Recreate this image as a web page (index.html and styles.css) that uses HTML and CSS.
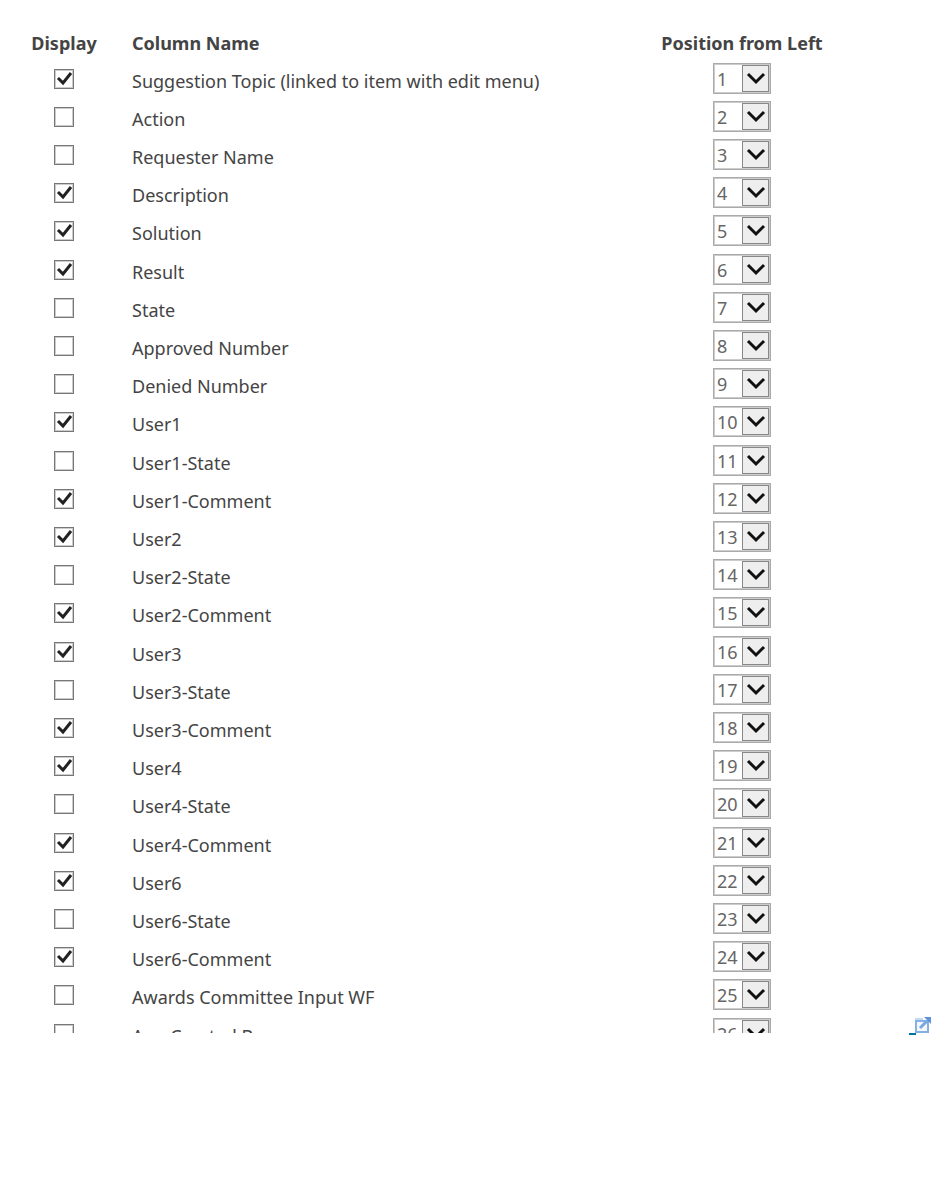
FILE: index.html
```html
<!DOCTYPE html>
<html lang="en">
<head>
<meta charset="utf-8">
<title>Edit View Columns</title>
<link rel="stylesheet" href="styles.css">
</head>
<body>
<main class="view">
<div class="list">
<table class="columns">
<thead>
<tr><th class="display">Display</th><th class="name">Column Name</th><th class="position">Position from Left</th></tr>
</thead>
<tbody>
<tr><td class="display"><input type="checkbox" id="c1" checked></td><td class="name"><label for="c1">Suggestion Topic (linked to item with edit menu)</label></td><td class="position"><select aria-label="Position of Suggestion Topic"><option>1</option></select></td></tr>
<tr><td class="display"><input type="checkbox" id="c2"></td><td class="name"><label for="c2">Action</label></td><td class="position"><select aria-label="Position of Action"><option>2</option></select></td></tr>
<tr><td class="display"><input type="checkbox" id="c3"></td><td class="name"><label for="c3">Requester Name</label></td><td class="position"><select aria-label="Position of Requester Name"><option>3</option></select></td></tr>
<tr><td class="display"><input type="checkbox" id="c4" checked></td><td class="name"><label for="c4">Description</label></td><td class="position"><select aria-label="Position of Description"><option>4</option></select></td></tr>
<tr><td class="display"><input type="checkbox" id="c5" checked></td><td class="name"><label for="c5">Solution</label></td><td class="position"><select aria-label="Position of Solution"><option>5</option></select></td></tr>
<tr><td class="display"><input type="checkbox" id="c6" checked></td><td class="name"><label for="c6">Result</label></td><td class="position"><select aria-label="Position of Result"><option>6</option></select></td></tr>
<tr><td class="display"><input type="checkbox" id="c7"></td><td class="name"><label for="c7">State</label></td><td class="position"><select aria-label="Position of State"><option>7</option></select></td></tr>
<tr><td class="display"><input type="checkbox" id="c8"></td><td class="name"><label for="c8">Approved Number</label></td><td class="position"><select aria-label="Position of Approved Number"><option>8</option></select></td></tr>
<tr><td class="display"><input type="checkbox" id="c9"></td><td class="name"><label for="c9">Denied Number</label></td><td class="position"><select aria-label="Position of Denied Number"><option>9</option></select></td></tr>
<tr><td class="display"><input type="checkbox" id="c10" checked></td><td class="name"><label for="c10">User1</label></td><td class="position"><select aria-label="Position of User1"><option>10</option></select></td></tr>
<tr><td class="display"><input type="checkbox" id="c11"></td><td class="name"><label for="c11">User1-State</label></td><td class="position"><select aria-label="Position of User1-State"><option>11</option></select></td></tr>
<tr><td class="display"><input type="checkbox" id="c12" checked></td><td class="name"><label for="c12">User1-Comment</label></td><td class="position"><select aria-label="Position of User1-Comment"><option>12</option></select></td></tr>
<tr><td class="display"><input type="checkbox" id="c13" checked></td><td class="name"><label for="c13">User2</label></td><td class="position"><select aria-label="Position of User2"><option>13</option></select></td></tr>
<tr><td class="display"><input type="checkbox" id="c14"></td><td class="name"><label for="c14">User2-State</label></td><td class="position"><select aria-label="Position of User2-State"><option>14</option></select></td></tr>
<tr><td class="display"><input type="checkbox" id="c15" checked></td><td class="name"><label for="c15">User2-Comment</label></td><td class="position"><select aria-label="Position of User2-Comment"><option>15</option></select></td></tr>
<tr><td class="display"><input type="checkbox" id="c16" checked></td><td class="name"><label for="c16">User3</label></td><td class="position"><select aria-label="Position of User3"><option>16</option></select></td></tr>
<tr><td class="display"><input type="checkbox" id="c17"></td><td class="name"><label for="c17">User3-State</label></td><td class="position"><select aria-label="Position of User3-State"><option>17</option></select></td></tr>
<tr><td class="display"><input type="checkbox" id="c18" checked></td><td class="name"><label for="c18">User3-Comment</label></td><td class="position"><select aria-label="Position of User3-Comment"><option>18</option></select></td></tr>
<tr><td class="display"><input type="checkbox" id="c19" checked></td><td class="name"><label for="c19">User4</label></td><td class="position"><select aria-label="Position of User4"><option>19</option></select></td></tr>
<tr><td class="display"><input type="checkbox" id="c20"></td><td class="name"><label for="c20">User4-State</label></td><td class="position"><select aria-label="Position of User4-State"><option>20</option></select></td></tr>
<tr><td class="display"><input type="checkbox" id="c21" checked></td><td class="name"><label for="c21">User4-Comment</label></td><td class="position"><select aria-label="Position of User4-Comment"><option>21</option></select></td></tr>
<tr><td class="display"><input type="checkbox" id="c22" checked></td><td class="name"><label for="c22">User6</label></td><td class="position"><select aria-label="Position of User6"><option>22</option></select></td></tr>
<tr><td class="display"><input type="checkbox" id="c23"></td><td class="name"><label for="c23">User6-State</label></td><td class="position"><select aria-label="Position of User6-State"><option>23</option></select></td></tr>
<tr><td class="display"><input type="checkbox" id="c24" checked></td><td class="name"><label for="c24">User6-Comment</label></td><td class="position"><select aria-label="Position of User6-Comment"><option>24</option></select></td></tr>
<tr><td class="display"><input type="checkbox" id="c25"></td><td class="name"><label for="c25">Awards Committee Input WF</label></td><td class="position"><select aria-label="Position of Awards Committee Input WF"><option>25</option></select></td></tr>
<tr><td class="display"><input type="checkbox" id="c26"></td><td class="name"><label for="c26">App Created By</label></td><td class="position"><select aria-label="Position of App Created By"><option>26</option></select></td></tr>
</tbody>
</table>
</div>
<a class="popout" href="#" aria-label="Open in new window"><svg width="22" height="18" viewBox="0 0 22 18" aria-hidden="true"><path d="M0 16h7v2H0z" fill="#0072a6"/><path d="M7 4h12v11H7z" fill="#f4f8fd" stroke="#84b0e6" stroke-width="2"/><path d="M6 1h8v2H6z" fill="#c3d9f5"/><path d="M11 11l7-7" stroke="#78a7e2" stroke-width="3"/><path d="M15 0h7v7l-2-2-3-3z" fill="#5c93da"/></svg></a>
</main>
</body>
</html>
```

FILE: styles.css
```css
* {
  box-sizing: border-box;
}

body {
  min-height: 100vh;
  margin: 0;
  background: #fff;
  color: #444;
  font-family: "Segoe UI", "Noto Sans", "Open Sans", sans-serif;
  font-size: 18px;
  line-height: 24px;
}

.view {
  display: flex;
  align-items: flex-end;
  padding: 28px 0 24px;
}

.list {
  flex: 1;
  max-height: 1005px;
  overflow: hidden;
}

.columns {
  width: 100%;
  border-collapse: collapse;
  table-layout: fixed;
}

th,
td {
  height: 38px;
  padding: 0;
  vertical-align: top;
}

th {
  height: 32px;
  padding-top: 3px;
}

tbody tr:nth-child(5n) td {
  height: 39px;
}

.display {
  width: 132px;
  padding-right: 4px;
  text-align: center;
}

.name {
  text-align: left;
}

td.name {
  padding-top: 9px;
}

.position {
  width: 334px;
  padding-right: 0;
  text-align: center;
}

input[type="checkbox"] {
  appearance: none;
  display: block;
  width: 20px;
  height: 20px;
  margin: 9px auto 0;
  border: 1px solid #777;
  outline: 1px solid #ccc;
  outline-offset: -2px;
  background: #fff;
}

input[type="checkbox"]:checked {
  background: url("data:image/svg+xml,%3Csvg xmlns='http://www.w3.org/2000/svg' viewBox='0 0 18 18'%3E%3Cpath d='M3 8l5 5 8-10' fill='none' stroke='%23222' stroke-width='3'/%3E%3C/svg%3E") center / 18px 18px no-repeat;
}

select {
  appearance: none;
  display: block;
  width: 58px;
  height: 31px;
  margin: 3px auto 0;
  padding: 0 29px 0 3px;
  border: 1px solid #aaa;
  border-radius: 0;
  outline: 1px solid #ccc;
  outline-offset: -2px;
  color: #666;
  font: inherit;
  background: #fff url("data:image/svg+xml,%3Csvg xmlns='http://www.w3.org/2000/svg' viewBox='0 0 29 29'%3E%3Cpath d='M1 0h28v29H1z' fill='%23888'/%3E%3Cpath d='M2 2h25v25H2z' fill='%23eee'/%3E%3Cpath d='M7 10l8 8 8-8' fill='none' stroke='%23111' stroke-width='3'/%3E%3C/svg%3E") right center / 29px 29px no-repeat;
}

.popout {
  flex: none;
  margin-bottom: -2px;
}

.popout svg {
  display: block;
}
```
